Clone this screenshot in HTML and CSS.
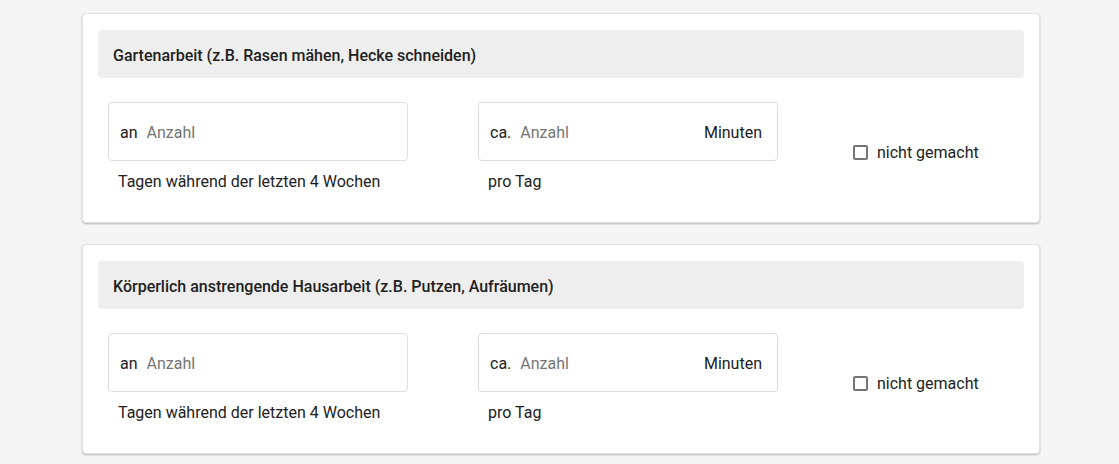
FILE: index.html
```html
<!DOCTYPE html>
<html lang="de">
<head>
<meta charset="utf-8">
<link rel="stylesheet" href="styles.css">
</head>
<body>
<main class="page">
  <section class="card">
    <div class="card-head">Gartenarbeit (z.B. Rasen mähen, Hecke schneiden)</div>
    <div class="row">
      <div class="col">
        <label class="field">
          <span class="prefix">an</span>
          <input class="inp" type="text" placeholder="Anzahl">
        </label>
        <div class="hint">Tagen während der letzten 4 Wochen</div>
      </div>
      <div class="col">
        <label class="field">
          <span class="prefix">ca.</span>
          <input class="inp" type="text" placeholder="Anzahl">
          <span class="suffix">Minuten</span>
        </label>
        <div class="hint">pro Tag</div>
      </div>
      <div class="col col-check">
        <label class="check"><span class="box"></span>nicht gemacht</label>
      </div>
    </div>
  </section>
  <section class="card">
    <div class="card-head">Körperlich anstrengende Hausarbeit (z.B. Putzen, Aufräumen)</div>
    <div class="row">
      <div class="col">
        <label class="field">
          <span class="prefix">an</span>
          <input class="inp" type="text" placeholder="Anzahl">
        </label>
        <div class="hint">Tagen während der letzten 4 Wochen</div>
      </div>
      <div class="col">
        <label class="field">
          <span class="prefix">ca.</span>
          <input class="inp" type="text" placeholder="Anzahl">
          <span class="suffix">Minuten</span>
        </label>
        <div class="hint">pro Tag</div>
      </div>
      <div class="col col-check">
        <label class="check"><span class="box"></span>nicht gemacht</label>
      </div>
    </div>
  </section>
</main>
</body>
</html>
```
FILE: styles.css
```css
* { box-sizing: border-box; }
html, body { margin: 0; padding: 0; }
body {
  background: #f5f5f5;
  font-family: Roboto, "Liberation Sans", sans-serif;
  color: #212121;
  height: 464px;
  overflow: hidden;
}
.page {
  width: 958px;
  margin: 0 auto 0 82px;
  padding-top: 13px;
  display: flex;
  flex-direction: column;
  gap: 21px;
}
.card {
  background: #fff;
  border-radius: 4px;
  border: 1px solid #e2e2e2;
  box-shadow: 0 1px 2px rgba(0,0,0,0.25);
  padding: 16px 15px 33px 15px;
  height: 210px;
}
.card-head {
  background: #eeeeee;
  border-radius: 4px;
  height: 48px;
  display: flex;
  align-items: center;
  padding: 2px 0 0 15px;
  font-size: 16px;
  font-weight: 500;
  color: #212121;
}
.row {
  display: grid;
  grid-template-columns: 370px 370px 1fr;
  padding: 24px 10px 0;
}
.field {
  width: 300px;
  height: 59px;
  border: 1px solid #dedede;
  border-radius: 4px;
  display: flex;
  align-items: center;
  padding: 2px 15px 0 11px;
  font-size: 16px;
}
.prefix { margin-right: 9px; color: #212121; }
.inp {
  border: 0;
  outline: 0;
  font: inherit;
  font-size: 16px;
  color: #212121;
  flex: 1;
  min-width: 0;
  padding: 0;
  background: transparent;
}
.inp::placeholder { color: #757575; opacity: 1; }
.suffix { color: #212121; }
.hint {
  font-size: 16px;
  padding: 11px 0 0 10px;
  color: #212121;
}
.col-check {
  display: flex;
  align-items: center;
  padding: 12px 0 0 5px;
}
.check {
  display: flex;
  align-items: center;
  font-size: 16px;
  color: #212121;
  gap: 9px;
}
.box {
  width: 15px;
  height: 15px;
  border: 2px solid #757575;
  border-radius: 2px;
  display: inline-block;
}
```
